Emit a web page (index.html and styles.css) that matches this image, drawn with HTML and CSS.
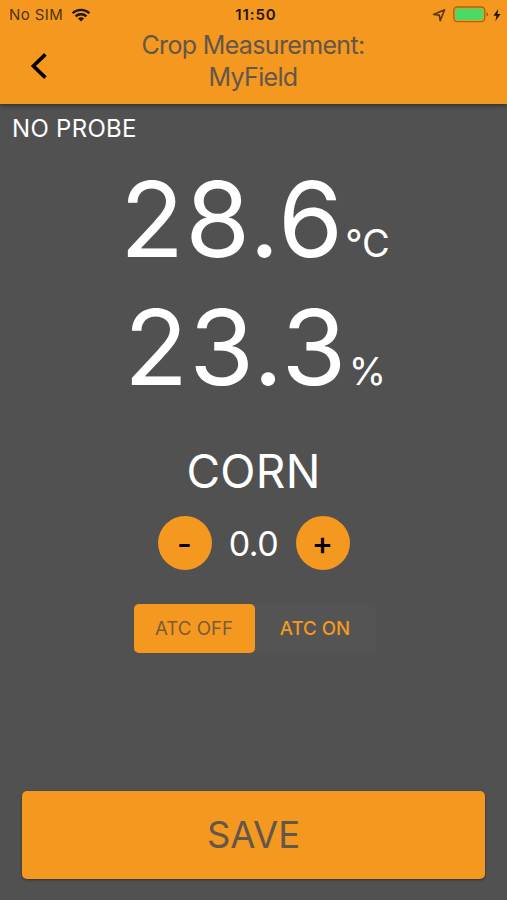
FILE: index.html
```
<!DOCTYPE html>
<html lang="en">
<head>
  <meta charset="UTF-8">
  <meta name="viewport" content="width=device-width, initial-scale=1.0">
  <title>Crop Measurement</title>
  <link rel="stylesheet" href="styles.css">
</head>
<body>
  <header class="header">
    <div class="status-bar">
      <div class="status-left">
        <span class="carrier">No SIM</span>
        <svg class="wifi" width="20" height="14" viewBox="0 0 20 14">
          <path d="M1.6 5.2C6.2 .7 13.8 .7 18.4 5.2M4.6 8.4C7.6 5.5 12.4 5.5 15.4 8.4" fill="none" stroke="#20160a" stroke-width="2.3"/>
          <path d="M10 13.6L6.9 10.4C8.6 8.9 11.4 8.9 13.1 10.4Z" fill="#20160a"/>
        </svg>
      </div>
      <span class="clock">11:50</span>
      <div class="status-right">
        <svg width="14" height="14" viewBox="0 0 14 14">
          <path d="M1.6 6.5L12.6 1.8L8.2 12.6L7.3 7.1Z" fill="none" stroke="#5a380d" stroke-width="1.6" stroke-linejoin="round"/>
        </svg>
        <svg class="battery" width="36" height="17" viewBox="0 0 36 17">
          <rect x=".8" y="1" width="31" height="14.6" rx="3.5" fill="none" stroke="#a9660f" stroke-width="1.4"/>
          <rect x="2.4" y="2.6" width="27.8" height="11.4" rx="2" fill="#4cd964"/>
          <path d="M33.6 6.2C35.6 7 35.6 9.6 33.6 10.4Z" fill="#8a5513"/>
        </svg>
        <svg class="bolt" width="8" height="12" viewBox="0 0 8 12">
          <path d="M5.2 0L.4 6.8H3.4L2.4 12L7.6 4.9H4.5Z" fill="#20160a"/>
        </svg>
      </div>
    </div>
    <div class="toolbar">
      <button class="back" aria-label="Back">
        <svg width="18" height="28" viewBox="0 0 18 28">
          <path d="M15.4 2.4L3.4 14L15.4 25.6" fill="none" stroke="#000" stroke-width="3.6"/>
        </svg>
      </button>
      <h1 class="title">Crop Measurement:<br>MyField</h1>
    </div>
  </header>

  <main class="content">
    <p class="probe">NO PROBE</p>
    <div class="reading temperature"><span class="value">28.6</span><span class="unit">°C</span></div>
    <div class="reading moisture"><span class="value">23.3</span><span class="unit">%</span></div>
    <h2 class="crop">CORN</h2>
    <div class="stepper">
      <button class="round">-</button>
      <span class="offset">0.0</span>
      <button class="round">+</button>
    </div>
    <div class="toggle">
      <button class="option active">ATC OFF</button>
      <button class="option">ATC ON</button>
    </div>
    <button class="save">SAVE</button>
  </main>
</body>
</html>
```
FILE: styles.css
```
* {
  box-sizing: border-box;
}
body {
  margin: 0;
  height: 900px;
  display: flex;
  flex-direction: column;
  overflow: hidden;
  background: #515151;
  color: white;
  font-family: Inter, Roboto, sans-serif;
}
button {
  padding: 0;
  border: none;
  font-family: inherit;
  cursor: pointer;
}
.header {
  height: 104px;
  background: #f59820;
  box-shadow: 0 1px 5px rgba(0,0,0,0.5);
}
.status-bar {
  display: grid;
  grid-template-columns: 1fr auto 1fr;
  align-items: center;
  height: 29px;
  padding: 0 6px 0 9px;
  color: #20160a;
  font-size: 15px;
}
.status-left, .status-right {
  display: flex;
  align-items: center;
}
.status-right {
  justify-content: flex-end;
}
.carrier {
  color: #4f330f;
  letter-spacing: 0.4px;
}
.wifi {
  margin-left: 8px;
}
.clock {
  margin-left: 2px;
  font-weight: 600;
  letter-spacing: 0.9px;
}
.battery {
  margin-left: 7px;
}
.bolt {
  margin-left: 4px;
}
.toolbar {
  display: grid;
  grid-template-columns: 60px 1fr 60px;
}
.back {
  height: 28px;
  margin-top: 23px;
  padding-left: 17px;
  background: none;
}
.back svg {
  display: block;
  margin: 0 auto;
}
.title {
  margin: 0 1px 0 0;
  text-align: center;
  color: #63564a;
  font-size: 25px;
  font-weight: 400;
  line-height: 32px;
  letter-spacing: -0.65px;
}
.content {
  flex: 1;
  display: flex;
  flex-direction: column;
  align-items: center;
  padding: 9px 22px 21px;
}
.probe {
  align-self: flex-start;
  margin: 0 0 0 -10px;
  font-size: 24px;
  line-height: 32px;
  letter-spacing: 0.3px;
}
.reading {
  display: flex;
  align-items: baseline;
  height: 128px;
  margin-left: 3px;
  line-height: 128px;
}
.temperature {
  margin-top: 10px;
}
.value {
  font-size: 105px;
  letter-spacing: 1.2px;
}
.unit {
  margin-left: 1px;
  font-size: 38px;
}
.crop {
  margin: 30px 0 0;
  font-size: 46px;
  font-weight: 400;
  line-height: 60px;
  letter-spacing: 0.3px;
}
.stepper {
  display: flex;
  align-items: center;
  margin-top: 15px;
}
.round {
  width: 54px;
  height: 54px;
  border-radius: 50%;
  background: #f59820;
  color: black;
  font-size: 32px;
  font-weight: 500;
}
.offset {
  width: 84px;
  text-align: center;
  font-size: 34px;
  letter-spacing: -0.5px;
}
.toggle {
  display: flex;
  margin: 34px 0 0 2px;
  border-radius: 5px;
  background: #545454;
}
.option {
  width: 121px;
  height: 49px;
  border-radius: 5px;
  background: none;
  color: #f59820;
  font-size: 18.7px;
  font-weight: 500;
}
.active {
  background: #f59820;
  color: #7b5c37;
  font-weight: 400;
}
.save {
  width: 100%;
  height: 88px;
  margin-top: auto;
  border-radius: 5px;
  background: #f59820;
  box-shadow: 0 1px 3px rgba(0,0,0,0.4);
  color: #63564a;
  font-size: 36.5px;
}
```
